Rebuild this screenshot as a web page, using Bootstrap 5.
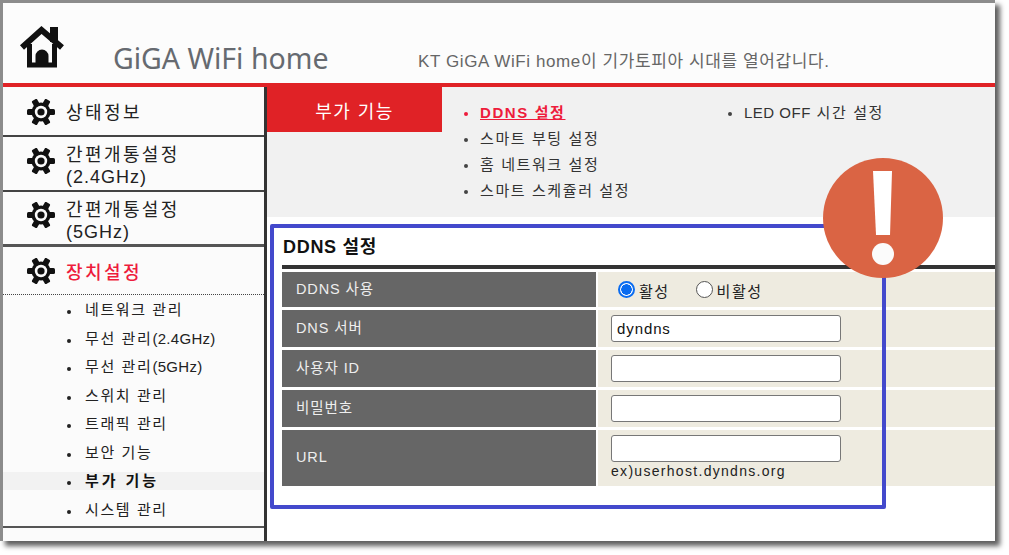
<!DOCTYPE html>
<html lang="ko">
<head>
  <title>GiGA WiFi home</title>
  <meta charset="utf-8">
  <meta name="viewport" content="width=device-width, initial-scale=1">
  <link href="https://cdn.jsdelivr.net/npm/bootstrap@5.3.3/dist/css/bootstrap.min.css" rel="stylesheet">
  <script src="https://cdn.jsdelivr.net/npm/bootstrap@5.3.3/dist/js/bootstrap.bundle.min.js"></script>
  <style>
    html, body { height: 100%; overflow: hidden; background: #fff; }
    body { font-family: "Liberation Sans", "Noto Sans CJK KR", sans-serif; color: #222; }
    .win {
      position: relative;
      width: 995px;
      height: 541px;
      background: #fff;
      border-top: 3px solid #8c8c8c;
      border-left: 3px solid #8c8c8c;
      box-shadow: 5px 5px 5px #5f5f5f;
    }
    .top-head { height: 80px; background: #fcfcfc; padding-left: 16px; }
    .home-ico { width: 46px; height: 42px; margin-top: 23px; flex: none; }
    .brand-name { font-family: "Noto Sans", sans-serif; font-size: 28.500px; line-height: 36px; color: #666a70; margin: 37px 0 0 48px; width: 305px; flex: none; }
    .brand-tag { font-size: 17px; line-height: 22px; color: #666; margin-top: 48px; letter-spacing: .6px; white-space: nowrap; }
    .red-line { height: 4px; background: #e02226; }
    .body-wrap { height: 454px; }
    .side { width: 264px; background: #fbfbfb; border-right: 3px solid #333; flex: none; }
    .side-item { font-size: 18px; line-height: 22px; letter-spacing: 2.400px; padding-left: 24px; gap: 11px; border-bottom: 2px solid #444; }
    .side-item svg { width: 28px; height: 26px; flex: none; }
    .side-item .ghz { letter-spacing: 1px; }
    .h48 { height: 50px; }
    .h53 { height: 55px; }
    .h52 { height: 55px; border-bottom: 3px solid #555; }
    .h47 { height: 48px; border-bottom: 1px dotted #444; color: #ee1c3c; font-weight: 500; }
    .txt-low { padding-top: 4px; }
    .txt-lower { padding-top: 5px; }
    .gear-low { margin-top: 2px; }
    .gear-up { margin-bottom: 6px; }
    .sub-list { list-style: none; margin: 0; padding: 1px 0 2px 0; border-bottom: 2px solid #555; }
    .sub-list li { height: 28.500px; line-height: 28.500px; font-size: 15px; letter-spacing: 1.600px; padding-left: 82px; position: relative; white-space: pre; }
    .sub-list li .ghz { letter-spacing: .3px; }
    .sub-list li::before { content: ""; position: absolute; left: 64px; top: 14px; width: 4px; height: 4px; border-radius: 50%; background: #222; }
    .sub-list li.on { background: #f2f2f2; font-weight: 700; color: #111; height: 18px; line-height: 18px; margin: 5px 0 5.500px; letter-spacing: 2.900px; }
    .sub-list li.on::before { top: 9px; }
    .main-col { flex: 1; }
    .tab-band { height: 130px; background: #f1f1f1; }
    .tab-red { width: 175px; height: 45px; background: #e02226; color: #fff; font-size: 18px; letter-spacing: 1.500px; padding-top: 5px; flex: none; }
    .menu-col { list-style: none; margin: 13px 0 0 0; padding: 0 0 0 38px; }
    .menu-col li { height: 26px; line-height: 26px; font-size: 15px; letter-spacing: 1.600px; position: relative; color: #333; }
    .menu-col li .ghz { letter-spacing: .5px; }
    .menu-col li::before { content: ""; position: absolute; left: -16px; top: 12px; width: 4px; height: 4px; border-radius: 50%; background: #444; }
    .menu-col li.on { color: #ee1c3c; font-weight: 700; text-decoration: underline; }
    .menu-col li.on::before { background: #ee1c3c; }
    .col-one { width: 264px; flex: none; }
    .sect-title { height: 48px; padding: 18px 0 0 16px; font-size: 18px; line-height: 24px; font-weight: 700; color: #111; letter-spacing: .7px; }
    .sect-rule { height: 4px; background: #333; margin-left: 15px; }
    .ddns-grid { display: grid; grid-template-columns: 314px 397px; grid-template-rows: 35px 37px 37px 37px 56px; gap: 3px 2px; margin: 3px 0 0 15px; }
    .lbl { background: #666; color: #eee; font-size: 14.500px; letter-spacing: .9px; padding-left: 14px; display: flex; align-items: center; }
    .val { background: #eeebe0; padding-left: 13px; display: flex; align-items: center; font-size: 15px; color: #222; }
    .val.stack { flex-direction: column; align-items: flex-start; padding-top: 5px; }
    .ddns-in.form-control { width: 230px; height: 27px; min-height: 0; padding: 0 5px; border: 1px solid #777; border-radius: 3px; font-size: 15px; line-height: 25px; color: #111; background: #fff; font-family: inherit; letter-spacing: .9px; }
    .hint { font-size: 14px; line-height: 17px; letter-spacing: 1.300px; margin-top: 1px; white-space: nowrap; }
    .radio-line { gap: 4px; padding: 3px 0 0 7px; }
    .radio-line input.form-check-input { width: 17px; height: 17px; margin: -3px 0 0 0; border: 1px solid #555; background-color: #fff; flex: none; }
    .radio-line input.form-check-input:checked[type=radio] { border: 2px solid #0a6cf0; background-color: #fff; background-image: radial-gradient(circle, #0a6cf0 0, #0a6cf0 5px, #fff 5.500px); box-shadow: none; }
    .radio-line label { margin-right: 22px; padding-top: 2px; font-size: 15px; letter-spacing: 1.500px; }
    .blue-box { position: absolute; left: 267px; top: 221px; width: 616px; height: 285px; border: 4px solid #4349cc; border-radius: 2px; pointer-events: none; }
    .warn { position: absolute; left: 820px; top: 155px; width: 120px; height: 120px; }
  </style>
</head>
<body class="m-0">

<svg width="0" height="0" class="position-absolute">
  <symbol id="gear" viewBox="0 0 28 26">
    <g fill="#111">
      <rect x="0" y="10" width="28" height="6" rx="1.5"/>
      <rect x="0" y="10" width="28" height="6" rx="1.5" transform="rotate(60 14 13)"/>
      <rect x="0" y="10" width="28" height="6" rx="1.5" transform="rotate(120 14 13)"/>
    </g>
    <circle cx="14" cy="13" r="9.5" fill="#111"/>
    <circle cx="14" cy="13" r="6.2" fill="#fbfbfb"/>
    <circle cx="14" cy="13" r="3.6" fill="#111"/>
  </symbol>
</svg>

<div class="win">
  <div class="top-head d-flex">
    <svg class="home-ico" viewBox="19 26 46 42">
      <path d="M50 27h8v15h-8z" fill="#111"/>
      <path d="M22 47.500L41.500 30L62 47.500" fill="none" stroke="#111" stroke-width="6"/>
      <path d="M29.500 44V65H54.500V44" fill="none" stroke="#111" stroke-width="5"/>
      <path d="M35.500 66V56a6.500 6.500 0 0 1 13 0V66z" fill="#111"/>
    </svg>
    <div class="brand-name">GiGA WiFi home</div>
    <div class="brand-tag">KT GiGA WiFi home이 기가토피아 시대를 열어갑니다.</div>
  </div>
  <div class="red-line"></div>

  <div class="body-wrap d-flex">
    <div class="side">
      <div class="side-item h48 d-flex align-items-center">
        <svg class="gear-low"><use href="#gear"/></svg><span class="txt-low">상태정보</span>
      </div>
      <div class="side-item h53 d-flex align-items-center">
        <svg class="gear-up"><use href="#gear"/></svg><span class="txt-lower">간편개통설정<br><span class="ghz">(2.4GHz)</span></span>
      </div>
      <div class="side-item h52 d-flex align-items-center">
        <svg class="gear-up"><use href="#gear"/></svg><span class="txt-lower">간편개통설정<br><span class="ghz">(5GHz)</span></span>
      </div>
      <div class="side-item h47 d-flex align-items-center">
        <svg><use href="#gear"/></svg><span class="txt-low">장치설정</span>
      </div>
      <ul class="sub-list">
        <li>네트워크 관리</li>
        <li>무선 관리<span class="ghz">(2.4GHz)</span></li>
        <li>무선 관리<span class="ghz">(5GHz)</span></li>
        <li>스위치 관리</li>
        <li>트래픽 관리</li>
        <li>보안 기능</li>
        <li class="on">부가 기능</li>
        <li>시스템 관리</li>
      </ul>
    </div>

    <div class="main-col">
      <div class="tab-band d-flex">
        <div class="tab-red d-flex align-items-center justify-content-center">부가 기능</div>
        <ul class="menu-col col-one">
          <li class="on">DDNS 설정</li>
          <li>스마트 부팅 설정</li>
          <li>홈 네트워크 설정</li>
          <li>스마트 스케쥴러 설정</li>
        </ul>
        <ul class="menu-col">
          <li><span class="ghz">LED OFF</span> 시간 설정</li>
        </ul>
      </div>

      <div class="sect-title">DDNS 설정</div>
      <div class="sect-rule"></div>
      <div class="ddns-grid">
        <div class="lbl">DDNS 사용</div>
        <div class="val">
          <div class="radio-line d-flex align-items-center">
            <input class="form-check-input" type="radio" name="ddns" id="on" checked>
            <label for="on">활성</label>
            <input class="form-check-input" type="radio" name="ddns" id="off">
            <label for="off">비활성</label>
          </div>
        </div>
        <div class="lbl">DNS 서버</div>
        <div class="val"><input class="form-control ddns-in" type="text" value="dyndns"></div>
        <div class="lbl">사용자 ID</div>
        <div class="val"><input class="form-control ddns-in" type="text"></div>
        <div class="lbl">비밀번호</div>
        <div class="val"><input class="form-control ddns-in" type="text"></div>
        <div class="lbl">URL</div>
        <div class="val stack">
          <input class="form-control ddns-in" type="text">
          <div class="hint">ex)userhost.dyndns.org</div>
        </div>
      </div>
    </div>
  </div>

  <div class="blue-box"></div>
  <svg class="warn" viewBox="0 0 120 120">
    <circle cx="60" cy="60" r="60" fill="#da6444"/>
    <path d="M50 13H69L67 77H53z" fill="#fff"/>
    <circle cx="60" cy="96" r="11" fill="#fbfbfb"/>
  </svg>
</div>

</body>
</html>
